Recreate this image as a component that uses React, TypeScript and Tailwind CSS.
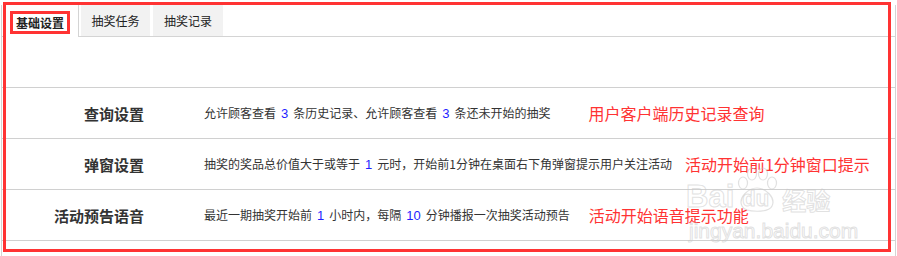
import React from "react";

type Part = { t: string; n?: boolean };

const rows: { label: string; desc: Part[]; note: string; gap: string }[] = [
  {
    label: "查询设置",
    desc: [
      { t: "允许顾客查看" },
      { t: "3", n: true },
      { t: "条历史记录、允许顾客查看" },
      { t: "3", n: true },
      { t: "条还未开始的抽奖" },
    ],
    note: "用户客户端历史记录查询",
    gap: "ml-[38px]",
  },
  {
    label: "弹窗设置",
    desc: [
      { t: "抽奖的奖品总价值大于或等于" },
      { t: "1", n: true },
      { t: "元时，开始前1分钟在桌面右下角弹窗提示用户关注活动" },
    ],
    note: "活动开始前1分钟窗口提示",
    gap: "ml-[13px]",
  },
  {
    label: "活动预告语音",
    desc: [
      { t: "最近一期抽奖开始前" },
      { t: "1", n: true },
      { t: "小时内，每隔" },
      { t: "10", n: true },
      { t: "分钟播报一次抽奖活动预告" },
    ],
    note: "活动开始语音提示功能",
    gap: "ml-[19px]",
  },
];

// faint baidu jingyan watermark, drawn over the page like in the screenshot
function Watermark() {
  const stroke = "[-webkit-text-stroke:1px_rgba(200,200,200,0.55)] text-transparent";
  return (
    <div className="absolute left-[686px] top-[166px] flex flex-col pointer-events-none select-none">
      <div className="flex items-end">
        <span className={`${stroke} text-[31px] font-bold leading-none font-['Liberation_Sans',sans-serif]`}>
          Bai
        </span>
        <div className="relative w-[46px] h-[48px] -mb-[2px]">
          <svg viewBox="0 0 46 48" className="absolute inset-0" width={46} height={48}>
            <g fill="none" stroke="rgba(200,200,200,0.55)" strokeWidth={1.2}>
              <ellipse cx="9" cy="17" rx="4.5" ry="6" />
              <ellipse cx="18" cy="8" rx="4.5" ry="6" />
              <ellipse cx="29" cy="8" rx="4.5" ry="6" />
              <ellipse cx="38" cy="17" rx="4.5" ry="6" />
              <path d="M8 40 C 4 32, 14 22, 23 22 C 32 22, 42 32, 38 40 C 35 47, 11 47, 8 40 Z" />
            </g>
          </svg>
          <span
            className={`${stroke} absolute left-[8px] bottom-[4px] text-[22px] font-bold leading-none font-['Liberation_Sans',sans-serif]`}
          >
            du
          </span>
        </div>
        <span className={`${stroke} text-[24px] leading-none ml-[2px] font-bold`}>经验</span>
      </div>
      <span
        className={`${stroke} text-[21px] leading-none mt-[8px] ml-[3px] font-['Liberation_Sans',sans-serif]`}
      >
        jingyan.baidu.com
      </span>
    </div>
  );
}

export default function App() {
  return (
    <div className="relative w-[897px] h-[256px] bg-white overflow-hidden text-[#333] font-['Noto_Sans_CJK_SC',sans-serif]">
      <div className="ml-[1px] w-[895px] h-[252px] border-x border-[#d4d4d4]">
        {/* tabs */}
        <div className="flex h-[32px] mt-[5px]">
          <div className="w-[4px] border-b border-[#d4d4d4]" />
          <div className="relative w-[73px] h-full border-r border-[#d4d4d4] bg-white">
            <div className="absolute left-[4px] top-[6px] w-[60px] h-[23px] border-[3px] border-[#ff3333] flex items-center justify-center">
              <span className="text-[12px] font-bold text-[#222] leading-none">基础设置</span>
            </div>
          </div>
          <div className="flex-1 flex border-b border-[#d4d4d4]">
            <div className="ml-[2px] w-[69px] bg-[#f2f2f2] flex items-center justify-center text-[12px] text-[#222]">
              抽奖任务
            </div>
            <div className="ml-[3px] w-[70px] bg-[#f2f2f2] flex items-center justify-center text-[12px] text-[#222]">
              抽奖记录
            </div>
          </div>
        </div>

        <div className="h-[51px] border-b border-[#d0d0d0]" />

        {rows.map((r) => (
          <div key={r.label} className="flex items-center h-[51px] border-b border-[#d0d0d0]">
            <div className="w-[142px] text-right text-[15px] font-bold leading-none">{r.label}</div>
            <div className="ml-[60px] text-[12px] leading-none whitespace-nowrap flex items-center">
              {r.desc.map((p, i) =>
                p.n ? (
                  <span
                    key={i}
                    className="mx-[5px] text-[13px] text-[#1f1fff] font-['Liberation_Sans',sans-serif]"
                  >
                    {p.t}
                  </span>
                ) : (
                  <span key={i}>{p.t}</span>
                )
              )}
            </div>
            <div className={`${r.gap} text-[16px] leading-none text-[#ff3333] whitespace-nowrap`}>{r.note}</div>
          </div>
        ))}
      </div>
      <div className="h-[4px] bg-[#e4e4e4]" />

      <Watermark />

      {/* annotation frame */}
      <div className="absolute left-[3px] top-[2px] w-[888px] h-[250px] border-[3px] border-[#ff3333] pointer-events-none" />
    </div>
  );
}
